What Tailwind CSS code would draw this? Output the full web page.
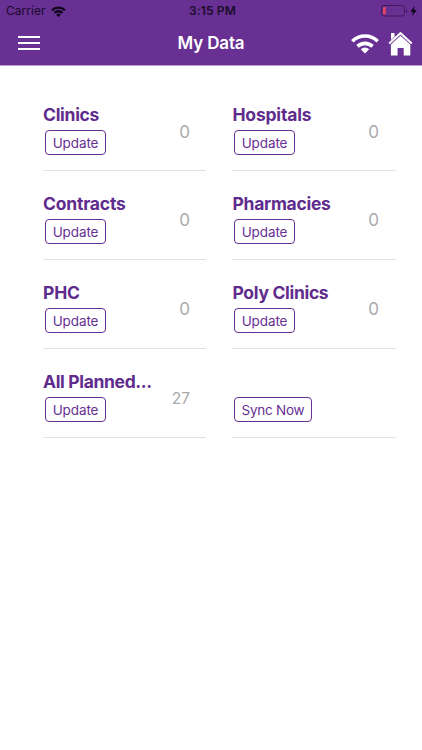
<!DOCTYPE html>
<html lang="en">

<head>
  <meta charset="UTF-8">
  <meta name="viewport" content="width=device-width, initial-scale=1.0">
  <title>My Data</title>
  <script src="https://cdn.jsdelivr.net/npm/@tailwindcss/browser@4"></script>
</head>

<body class="bg-white font-['Inter',sans-serif] h-screen overflow-hidden flex flex-col">

  <!-- Header -->
  <header class="bg-[#673092] h-[66px] shrink-0 border-b border-[#b89bcb]">
    <!-- Status bar -->
    <div class="grid grid-cols-[1fr_auto_1fr] items-center h-[22px] pl-[6px] pr-[4px] text-[#1b0b2c]">
      <div class="flex items-center gap-[5px]">
        <span class="text-[12px] leading-none tracking-[0.05px]">Carrier</span>
        <svg class="w-[15px] h-[11px]" viewBox="0 0 30 22" fill="none" stroke="#0d0418" stroke-width="4.6">
          <path d="M2 8.5a18.5 18.5 0 0 1 26 0" />
          <path d="M7 13.8a11.3 11.3 0 0 1 16 0" />
          <path d="M15 22l-4.6-4.7a6.5 6.5 0 0 1 9.2 0z" fill="#0d0418" stroke="none" />
        </svg>
      </div>
      <span class="text-[12px] leading-none font-semibold tracking-[0.15px] pl-px">3:15 PM</span>
      <div class="flex items-center justify-end">
        <svg class="w-[37px] h-[12px]" viewBox="0 0 37 12">
          <rect x="0.5" y="0.5" width="23" height="10.5" rx="2.5" fill="none" stroke="#3f1a60" />
          <rect x="2" y="2" width="2.8" height="7.5" rx="0.8" fill="#e8415c" />
          <path d="M25 4a2 2 0 0 1 0 3.8z" fill="#3f1a60" />
          <path d="M33.9 0.8L29.4 6.7h2.8l-1.4 4.6 5-6.2h-3z" fill="#0d0418" />
        </svg>
      </div>
    </div>
    <!-- Title bar -->
    <div class="grid grid-cols-[1fr_auto_1fr] items-center h-[42px] px-[9px]">
      <button class="ml-[9px] w-[22px] flex flex-col gap-[4px]" aria-label="Menu">
        <span class="h-[2px] bg-white"></span>
        <span class="h-[2px] bg-white"></span>
        <span class="h-[2px] bg-white"></span>
      </button>
      <h1 class="text-[17px] leading-none font-semibold text-white tracking-[-0.15px]">My Data</h1>
      <div class="flex items-center justify-end gap-[9px]">
        <svg class="w-[28px] h-[21px]" viewBox="0 0 28 21" fill="none" stroke="#fff" stroke-width="3.6">
          <path d="M1.3 8.2a18.2 18.2 0 0 1 25.4 0" />
          <path d="M6.5 13.4a10.8 10.8 0 0 1 15 0" />
          <path d="M14 20.5l-4.2-4.2a6 6 0 0 1 8.4 0z" fill="#fff" stroke="none" />
        </svg>
        <svg class="w-[25px] h-[25px]" viewBox="0 0 25 25">
          <path d="M1.2 12.6L12.5 2.2l11.3 10.4" fill="none" stroke="#fff" stroke-width="2" />
          <path d="M3 2h3.5v3.8L3 9z" fill="#fff" />
          <path d="M12.5 4.8l9.8 8.8v10.9h-6.6v-7.6H9.6v7.6H2.9V13.6z" fill="#fff" />
        </svg>
      </div>
    </div>
  </header>

  <!-- Data cards -->
  <main class="grid grid-cols-[163px_164px] gap-x-[26px] auto-rows-[89px] pl-[43px] pt-[16px]">
    <section class="flex justify-between border-b border-[#e2e2e2] pr-[16px]">
      <div class="pt-[21px]">
        <h2 class="text-[17.5px] leading-[24px] font-bold text-[#5f2c8e] tracking-[-0.3px]">Clinics</h2>
        <button class="block ml-[2px] mt-[3px] w-[61px] h-[25px] border border-[#673092] rounded-[4px] text-[13.5px] leading-[24px] text-[#673092] tracking-[-0.1px]">Update</button>
      </div>
      <span class="pt-[39px] text-[17px] leading-[22px] text-[#a9a9ad]">0</span>
    </section>

    <section class="flex justify-between border-b border-[#e2e2e2] pr-[17px]">
      <div class="pt-[21px]">
        <h2 class="text-[17.5px] leading-[24px] font-bold text-[#5f2c8e] pl-[0.5px] tracking-[-0.2px]">Hospitals</h2>
        <button class="block ml-[2px] mt-[3px] w-[61px] h-[25px] border border-[#673092] rounded-[4px] text-[13.5px] leading-[24px] text-[#673092] tracking-[-0.1px]">Update</button>
      </div>
      <span class="pt-[39px] text-[17px] leading-[22px] text-[#a9a9ad]">0</span>
    </section>

    <section class="flex justify-between border-b border-[#e2e2e2] pr-[16px]">
      <div class="pt-[21px]">
        <h2 class="text-[17.5px] leading-[24px] font-bold text-[#5f2c8e] tracking-[-0.2px]">Contracts</h2>
        <button class="block ml-[2px] mt-[3px] w-[61px] h-[25px] border border-[#673092] rounded-[4px] text-[13.5px] leading-[24px] text-[#673092] tracking-[-0.1px]">Update</button>
      </div>
      <span class="pt-[38px] text-[17px] leading-[22px] text-[#a9a9ad]">0</span>
    </section>

    <section class="flex justify-between border-b border-[#e2e2e2] pr-[17px]">
      <div class="pt-[21px]">
        <h2 class="text-[17.5px] leading-[24px] font-bold text-[#5f2c8e] pl-[0.5px] tracking-[-0.3px]">Pharmacies</h2>
        <button class="block ml-[2px] mt-[3px] w-[61px] h-[25px] border border-[#673092] rounded-[4px] text-[13.5px] leading-[24px] text-[#673092] tracking-[-0.1px]">Update</button>
      </div>
      <span class="pt-[38px] text-[17px] leading-[22px] text-[#a9a9ad]">0</span>
    </section>

    <section class="flex justify-between border-b border-[#e2e2e2] pr-[16px]">
      <div class="pt-[21px]">
        <h2 class="text-[17.5px] leading-[24px] font-bold text-[#5f2c8e] tracking-[-0.2px]">PHC</h2>
        <button class="block ml-[2px] mt-[3px] w-[61px] h-[25px] border border-[#673092] rounded-[4px] text-[13.5px] leading-[24px] text-[#673092] tracking-[-0.1px]">Update</button>
      </div>
      <span class="pt-[38px] text-[17px] leading-[22px] text-[#a9a9ad]">0</span>
    </section>

    <section class="flex justify-between border-b border-[#e2e2e2] pr-[17px]">
      <div class="pt-[21px]">
        <h2 class="text-[17.5px] leading-[24px] font-bold text-[#5f2c8e] pl-[0.5px] tracking-[-0.32px]">Poly Clinics</h2>
        <button class="block ml-[2px] mt-[3px] w-[61px] h-[25px] border border-[#673092] rounded-[4px] text-[13.5px] leading-[24px] text-[#673092] tracking-[-0.1px]">Update</button>
      </div>
      <span class="pt-[38px] text-[17px] leading-[22px] text-[#a9a9ad]">0</span>
    </section>

    <section class="flex justify-between border-b border-[#e2e2e2] pr-[16px]">
      <div class="pt-[21px]">
        <h2 class="text-[17.5px] leading-[24px] font-bold text-[#5f2c8e] tracking-[-0.35px] whitespace-nowrap">All Planned...</h2>
        <button class="block ml-[2px] mt-[3px] w-[61px] h-[25px] border border-[#673092] rounded-[4px] text-[13.5px] leading-[24px] text-[#673092] tracking-[-0.1px]">Update</button>
      </div>
      <span class="pt-[39px] text-[15.5px] leading-[22px] text-[#a9a9ad]">27</span>
    </section>

    <section class="border-b border-[#e2e2e2] pt-[48px]">
      <button class="block ml-[2px] w-[78px] h-[25px] border border-[#673092] rounded-[4px] text-[13.5px] leading-[24px] text-[#673092] tracking-[-0.25px]">Sync Now</button>
    </section>
  </main>

</body>

</html>
